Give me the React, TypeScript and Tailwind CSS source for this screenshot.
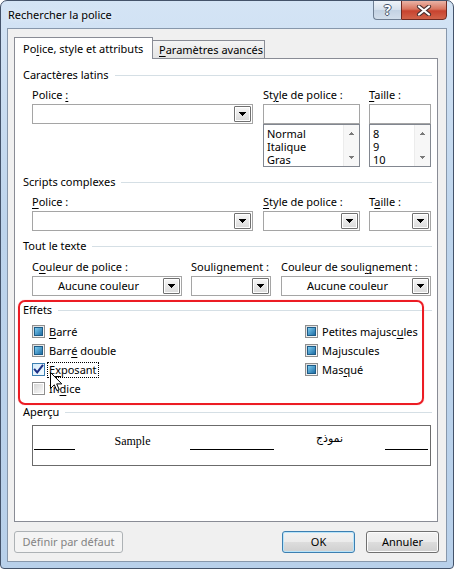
import React from "react";

const U = ({ children }: { children: React.ReactNode }) => (
  <span className="underline decoration-1 underline-offset-[2px]">{children}</span>
);

function DropBtn() {
  return (
    <div className="w-[17px] h-[16px] shrink-0 border border-[#707070] rounded-[1px] bg-[linear-gradient(#f7f7f7,#dadada)] shadow-[inset_0_0_0_1px_#ffffff] flex items-center justify-center">
      <svg width="7" height="4" viewBox="0 0 7 4" shapeRendering="crispEdges">
        <path d="M0 0H7L3.5 4Z" fill="#000" />
      </svg>
    </div>
  );
}

function Combo({ className, text }: { className: string; text?: string }) {
  return (
    <div className={`h-[20px] border border-[#a5a5a5] bg-white p-px flex ${className}`}>
      <div className="flex-1 flex items-center justify-center leading-4">{text}</div>
      <DropBtn />
    </div>
  );
}

function Group({ title, className }: { title: React.ReactNode; className?: string }) {
  return (
    <div className={`flex items-center h-4 pl-[8px] pr-[5px] ${className ?? ""}`}>
      <span className="leading-4 whitespace-nowrap">{title}</span>
      <div className="flex-1 h-px bg-[#d5dfe5] ml-[6px]" />
    </div>
  );
}

function ScrollArrow({ up }: { up?: boolean }) {
  return (
    <svg width="5" height="3" viewBox="0 0 5 3" shapeRendering="crispEdges">
      <path d={up ? "M0 3H5L2.5 0Z" : "M0 0H5L2.5 3Z"} fill="#7a7a7a" />
    </svg>
  );
}

function ListBox({ items }: { items: string[] }) {
  return (
    <div className="h-[43px] border border-[#828790] bg-white flex">
      <div className="flex-1 pl-[3px] pt-[2px] flex flex-col">
        {items.map((t) => (
          <div key={t} className="leading-[13px]">
            {t}
          </div>
        ))}
      </div>
      <div className="w-[16px] bg-[#f7f7f7] border-l border-[#ececec] flex flex-col items-center justify-between py-[7px]">
        <ScrollArrow up />
        <ScrollArrow />
      </div>
    </div>
  );
}

function Box({ state }: { state: "ind" | "on" | "off" }) {
  if (state === "ind")
    return (
      <div className="w-[13px] h-[13px] shrink-0 border border-[#8f8f8f] bg-[linear-gradient(135deg,#dcdcdc,#fbfbfb)] flex items-center justify-center">
        <div className="w-[9px] h-[9px] border border-[#1e5b86] bg-[linear-gradient(135deg,#7ccbf0,#1f6ea5)]" />
      </div>
    );
  if (state === "on")
    return (
      <div className="w-[13px] h-[13px] shrink-0 border border-[#3c7fb1] bg-[linear-gradient(135deg,#d6ecfb,#f4fbff)] flex items-center justify-center">
        <svg width="11" height="11" viewBox="0 0 11 11">
          <path d="M1.8 5.6L4.2 8.4L9.4 1.6" fill="none" stroke="#1b2f86" strokeWidth="2" strokeLinecap="square" />
        </svg>
      </div>
    );
  return (
    <div className="w-[13px] h-[13px] shrink-0 border border-[#8f8f8f] bg-white p-px">
      <div className="w-full h-full bg-[linear-gradient(135deg,#d6d6d6,#f8f8f8)]" />
    </div>
  );
}

function Check({ state, children }: { state: "ind" | "on" | "off"; children: React.ReactNode }) {
  return (
    <div className="flex items-center h-[19px]">
      <Box state={state} />
      <span className="ml-[4px] leading-[14px] whitespace-nowrap">{children}</span>
    </div>
  );
}

export default function App() {
  return (
    <div className="w-[454px] h-[569px] flex flex-col rounded-t-[7px] rounded-b-[4px] border border-[#44536a] bg-[linear-gradient(#d4e4f5,#bdd4ec_40%,#b8d0ea)] overflow-hidden text-[11px] text-black font-['Noto_Sans',sans-serif]">
      {/* Title bar */}
      <div className="h-[27px] flex items-start shrink-0">
        <div className="pl-[7px] pt-[6px] leading-4 [text-shadow:0_0_6px_#ffffff]">Rechercher la police</div>
        <div className="ml-auto mr-[6px] -mt-px flex">
          <div className="w-[28px] h-[20px] border border-[#6f7f93] border-r-0 rounded-bl-[4px] bg-[linear-gradient(#eef3f9,#d5e0ec_50%,#c3d2e3_51%,#d2deeb)] flex items-center justify-center">
            <span className="text-white font-bold text-[14px] leading-none [text-shadow:1px_0_#46546a,-1px_0_#46546a,0_1px_#46546a,0_-1px_#46546a]">?</span>
          </div>
          <div className="w-[46px] h-[20px] border border-[#6e2a22] rounded-br-[4px] bg-[linear-gradient(#eab3a6,#d9755f_45%,#c8432f_55%,#d2634a)] flex items-center justify-center">
            <svg width="16" height="11" viewBox="0 0 16 11">
              <path d="M3 1.5L13 9.5M13 1.5L3 9.5" stroke="#4a3030" strokeWidth="4.2" strokeLinecap="round" />
              <path d="M3 1.5L13 9.5M13 1.5L3 9.5" stroke="#ffffff" strokeWidth="2.2" strokeLinecap="round" />
            </svg>
          </div>
        </div>
      </div>

      {/* Client area */}
      <div className="mx-[6px] h-[534px] border border-[#8797ab] bg-[#f0f0f0] flex flex-col shrink-0">
        {/* Tabs */}
        <div className="flex items-end pl-[6px] pt-[8px]">
          <div className="relative z-10 w-[139px] h-[22px] border border-b-0 border-[#898c95] bg-white pl-[8px] pt-[3px] leading-4 whitespace-nowrap">
            Po<U>l</U>ice, style et attributs
          </div>
          <div className="-ml-px w-[113px] h-[19px] border border-[#898c95] bg-[linear-gradient(#f4f4f4,#e4e4e4)] pl-[6px] pt-[1px] leading-4 whitespace-nowrap">
            <U>P</U>aramètres avancés
          </div>
        </div>

        {/* Panel */}
        <div className="-mt-px ml-[6px] w-[424px] h-[464px] border border-[#898c95] bg-white flex flex-col">
          <Group title="Caractères latins" className="mt-[8px]" />
          <div className="flex pl-[17px] mt-[4px]">
            <div className="w-[221px] flex flex-col">
              <div className="leading-4">
                Police <U>:</U>
              </div>
              <Combo className="mt-px" />
            </div>
            <div className="ml-[10px] w-[97px] flex flex-col">
              <div className="leading-4 whitespace-nowrap">
                St<U>y</U>le de police :
              </div>
              <div className="mt-px h-[20px] border border-[#a5a5a5] bg-white" />
              <ListBox items={["Normal", "Italique", "Gras"]} />
            </div>
            <div className="ml-[9px] w-[62px] flex flex-col">
              <div className="leading-4">
                <U>T</U>aille :
              </div>
              <div className="mt-px h-[20px] border border-[#a5a5a5] bg-white" />
              <ListBox items={["8", "9", "10"]} />
            </div>
          </div>

          <Group title="Scripts complexes" className="mt-[7px]" />
          <div className="flex pl-[17px] mt-[4px]">
            <div className="w-[221px] flex flex-col">
              <div className="leading-4">
                <U>P</U>olice :
              </div>
              <Combo className="mt-px" />
            </div>
            <div className="ml-[10px] w-[97px] flex flex-col">
              <div className="leading-4 whitespace-nowrap">
                <U>S</U>tyle de police :
              </div>
              <Combo className="mt-px" />
            </div>
            <div className="ml-[9px] w-[62px] flex flex-col">
              <div className="leading-4">
                T<U>a</U>ille :
              </div>
              <Combo className="mt-px" />
            </div>
          </div>

          <Group title="Tout le texte" className="mt-[7px]" />
          <div className="flex pl-[17px] mt-[5px]">
            <div className="w-[150px] flex flex-col">
              <div className="leading-4 whitespace-nowrap">
                C<U>o</U>uleur de police :
              </div>
              <Combo className="mt-px" text="Aucune couleur" />
            </div>
            <div className="ml-[9px] w-[80px] flex flex-col">
              <div className="leading-4 whitespace-nowrap">Soulignement :</div>
              <Combo className="mt-px" />
            </div>
            <div className="ml-[10px] w-[150px] flex flex-col">
              <div className="leading-4 whitespace-nowrap">
                Couleur de souli<U>g</U>nement :
              </div>
              <Combo className="mt-px" text="Aucune couleur" />
            </div>
          </div>

          {/* Effets */}
          <div className="relative mt-[6px]">
            <Group title="Effets" />
            <div className="flex pl-[17px] mt-[4px]">
              <div className="w-[273px] flex flex-col">
                <Check state="ind">
                  <U>B</U>arré
                </Check>
                <Check state="ind">
                  Barr<U>é</U> double
                </Check>
                <div className="flex items-center h-[19px]">
                  <Box state="on" />
                  <span className="ml-[2px] px-px border border-dotted border-black leading-[14px] whitespace-nowrap">
                    E<U>x</U>posant
                  </span>
                </div>
                <Check state="off">
                  In<U>d</U>ice
                </Check>
              </div>
              <div className="flex flex-col">
                <Check state="ind">
                  Petites majusc<U>u</U>les
                </Check>
                <Check state="ind">Majuscules</Check>
                <Check state="ind">
                  Mas<U>q</U>ué
                </Check>
              </div>
            </div>
            <div className="absolute left-[3px] right-[13px] top-[-2px] bottom-[-7px] border-2 border-[#ec1c24] rounded-[7px] pointer-events-none shadow-[0_0_1px_#ff8080]" />
            <svg className="absolute left-[35px] top-[70px]" width="13" height="20" viewBox="0 0 13 20">
              <path
                d="M0.5 0.5V16.5L4.3 12.8L6.8 18.6L9.2 17.6L6.7 11.9H11.8Z"
                fill="#ffffff"
                stroke="#000000"
                strokeWidth="1"
                strokeLinejoin="miter"
              />
            </svg>
          </div>

          <Group title={<>Aperçu</>} className="mt-[6px]" />
          <div className="ml-[17px] mr-[6px] mt-[5px] h-[41px] border border-[#6b6b6b] flex pl-px">
            <div className="w-[41px] h-px bg-black mt-[23px]" />
            <div className="w-[115px] text-center mt-[8px] leading-[14px] text-[12px] font-['Liberation_Serif',serif]">
              Sample
            </div>
            <div className="w-[84px] h-px bg-black mt-[23px]" />
            <div className="w-[111px] text-center mt-[6px] leading-[14px] text-[11px] font-['DejaVu_Sans',sans-serif]">
              نموذج
            </div>
            <div className="w-[43px] h-px bg-black mt-[23px]" />
          </div>
        </div>

        {/* Buttons */}
        <div className="flex mt-[9px] pl-[6px] pr-[7px]">
          <div className="w-[109px] h-[22px] border border-[#adb2b5] rounded-[3px] bg-[#f4f4f4] text-[#838383] flex items-center justify-center leading-4">
            Définir par défaut
          </div>
          <div className="ml-auto w-[73px] h-[22px] border border-[#3c7fb1] rounded-[3px] bg-[linear-gradient(#f2f2f2,#ebebeb_50%,#dddddd_51%,#cfcfcf)] shadow-[inset_0_0_0_1px_#b8e4fa] flex items-center justify-center leading-4">
            OK
          </div>
          <div className="ml-[11px] w-[73px] h-[22px] border border-[#707070] rounded-[3px] bg-[linear-gradient(#f2f2f2,#ebebeb_50%,#dddddd_51%,#cfcfcf)] shadow-[inset_0_0_0_1px_#fcfcfc] flex items-center justify-center leading-4">
            Annuler
          </div>
        </div>
      </div>
    </div>
  );
}
